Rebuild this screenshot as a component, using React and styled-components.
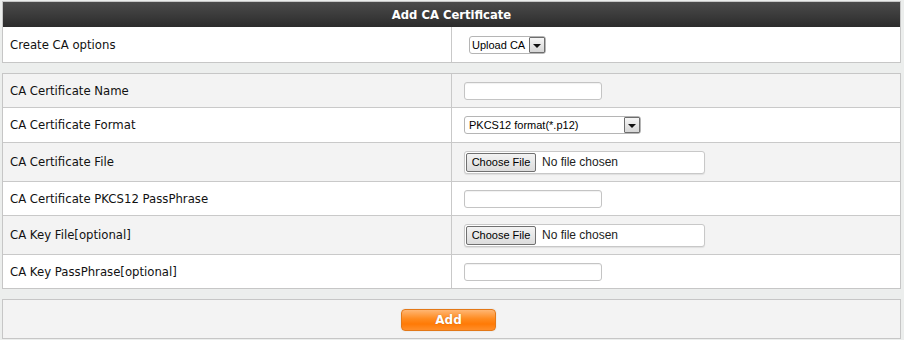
import React from "react";
import styled, { createGlobalStyle } from "styled-components";

const Global = createGlobalStyle`
  html, body { margin: 0; padding: 0; background: #eceeed; }
  body { font-family: "DejaVu Sans", Verdana, sans-serif; font-size: 11.7px; color: #111; }
`;

const Page = styled.div`
  padding: 1px 3px 0 2px;
  display: flex;
  flex-direction: column;
  gap: 10px;
`;

const Panel = styled.div`
  border: 1px solid #c6c6c6;
  background: ${(p) => p.$bg || "#fff"};
`;

const Header = styled.div`
  height: 25px;
  display: flex;
  align-items: center;
  justify-content: center;
  background: linear-gradient(#4b4b4b, #2c2c2c);
  color: #fff;
  font-weight: bold;
  font-size: 11.6px;
`;

const Row = styled.div`
  display: grid;
  grid-template-columns: 448px 1px 1fr;
  height: ${(p) => p.$h}px;
  background: ${(p) => (p.$alt ? "#f3f3f3" : "#fff")};
  & + & { border-top: 1px solid #c9c9c9; }
`;

const Divider = styled.div`
  background: #c9c9c9;
`;

const Label = styled.div`
  display: flex;
  align-items: center;
  padding-left: 7px;
  white-space: nowrap;
`;

const Field = styled.div`
  display: flex;
  align-items: center;
  padding-left: ${(p) => p.$pl || 12}px;
`;

const TextInput = styled.div`
  width: 136px;
  height: 16px;
  border: 1px solid #c4c4c4;
  border-radius: 3px;
  background: #fff;
  box-shadow: inset 0 1px 1px rgba(0, 0, 0, 0.06);
`;

const SelectBox = styled.div`
  width: ${(p) => p.$w}px;
  height: 16px;
  border: 1px solid #b5b5b5;
  border-radius: 3px;
  background: #fff;
  display: flex;
  align-items: center;
  justify-content: space-between;
  font-family: "Liberation Sans", Arial, sans-serif;
  font-size: 11px;
  color: #000;
  padding-left: ${(p) => p.$pl}px;
  white-space: nowrap;
  box-sizing: content-box;
`;

const ArrowBox = styled.div`
  width: 16px;
  height: 16px;
  border: 1px solid #6e6e6e;
  border-radius: 1px;
  background: linear-gradient(#f6f6f6, #d6d6d6);
  display: flex;
  align-items: center;
  justify-content: center;
  box-sizing: border-box;
`;

const Triangle = styled.div`
  width: 0;
  height: 0;
  border-left: 4px solid transparent;
  border-right: 4px solid transparent;
  border-top: 4px solid #111;
  margin-top: 2px;
`;

const FileBox = styled.div`
  width: 238px;
  height: 21px;
  border: 1px solid #c8c8c8;
  border-radius: 3px;
  background: #fff;
  display: flex;
  align-items: center;
  gap: 6px;
  padding-left: 1px;
  box-shadow: 0 1px 1px rgba(0, 0, 0, 0.08);
  font-family: "Liberation Sans", Arial, sans-serif;
  font-size: 12px;
  color: #222;
`;

const ChooseButton = styled.div`
  width: 68px;
  height: 17px;
  border: 1px solid #707070;
  border-radius: 2px;
  background: linear-gradient(#f3f3f3, #dcdcdc);
  display: flex;
  align-items: center;
  justify-content: center;
  font-size: 11px;
  color: #000;
`;

const Footer = styled.div`
  height: 37px;
  display: flex;
  align-items: center;
  justify-content: center;
  padding-right: 6px;
  padding-top: 1px;
`;

const AddButton = styled.button`
  width: 95px;
  height: 22px;
  border: 1px solid #e37818;
  border-radius: 4px;
  background: linear-gradient(#ffb673 0%, #ff8a1e 45%, #ff7a06 70%, #ff8e2a 100%);
  color: #fff;
  font-family: "DejaVu Sans", Verdana, sans-serif;
  font-weight: bold;
  font-size: 12px;
  text-shadow: 0 0 1px rgba(120, 50, 0, 0.5);
  padding: 0;
  box-shadow: 0 0 0 1px #ececec;
`;

const Select = ({ w, pl, value }) => (
  <SelectBox $w={w} $pl={pl}>
    <span>{value}</span>
    <ArrowBox>
      <Triangle />
    </ArrowBox>
  </SelectBox>
);

const FileInput = () => (
  <FileBox>
    <ChooseButton>Choose File</ChooseButton>
    <span>No file chosen</span>
  </FileBox>
);

const rows = [
  { label: "CA Certificate Name", h: 33, control: <TextInput /> },
  { label: "CA Certificate Format", h: 34, control: <Select w={171} pl={4} value="PKCS12 format(*.p12)" /> },
  { label: "CA Certificate File", h: 38, control: <FileInput /> },
  { label: "CA Certificate PKCS12 PassPhrase", h: 33, control: <TextInput /> },
  { label: "CA Key File[optional]", h: 38, control: <FileInput /> },
  { label: "CA Key PassPhrase[optional]", h: 33, control: <TextInput /> },
];

export default function App() {
  return (
    <>
      <Global />
      <Page>
        <Panel>
          <Header>Add CA Certificate</Header>
          <Row $h={35}>
            <Label>Create CA options</Label>
            <Divider />
            <Field $pl={17}>
              <Select w={73} pl={2} value="Upload CA" />
            </Field>
          </Row>
        </Panel>
        <Panel>
          {rows.map((r, i) => (
            <Row key={r.label} $h={r.h} $alt={i % 2 === 0}>
              <Label>{r.label}</Label>
              <Divider />
              <Field>{r.control}</Field>
            </Row>
          ))}
        </Panel>
        <Panel $bg="#f3f3f3">
          <Footer>
            <AddButton>Add</AddButton>
          </Footer>
        </Panel>
      </Page>
    </>
  );
}
